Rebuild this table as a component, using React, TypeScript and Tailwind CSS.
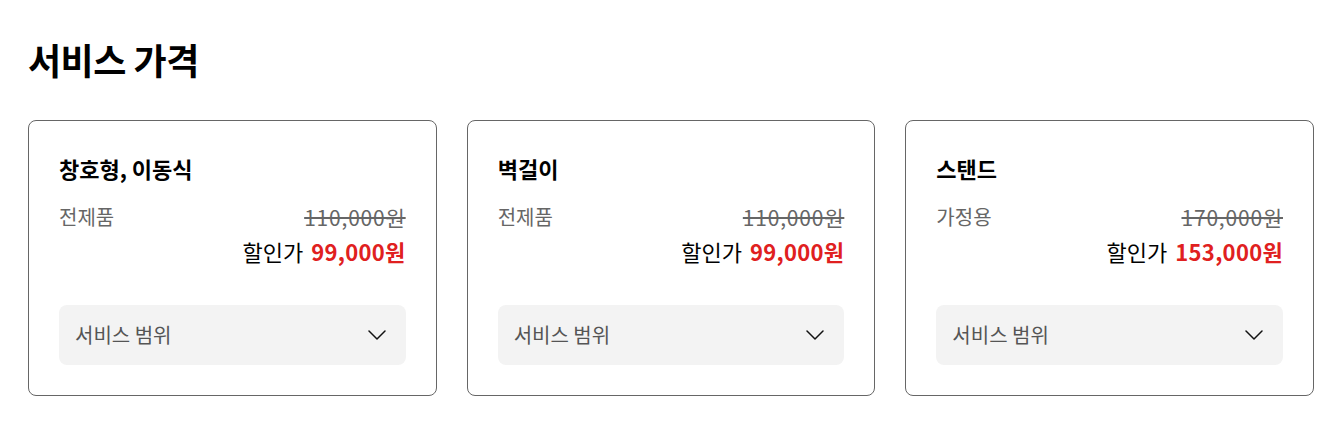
const PLANS = [
  { title: "창호형, 이동식", label: "전제품", original: "110,000원", sale: "99,000원" },
  { title: "벽걸이", label: "전제품", original: "110,000원", sale: "99,000원" },
  { title: "스탠드", label: "가정용", original: "170,000원", sale: "153,000원" },
];

function Chevron() {
  return (
    <svg width="18" height="10" viewBox="0 0 18 10" fill="none" className="shrink-0">
      <polyline points="1,1 9,9 17,1" stroke="#111" strokeWidth="1.5" strokeLinecap="round" strokeLinejoin="round" />
    </svg>
  );
}

export default function App() {
  return (
    <div className="bg-white px-[28px] pt-[35px] pb-[37px] font-['Noto_Sans_CJK_KR','Noto_Sans',sans-serif] text-black overflow-hidden">
      <h2 className="text-[36px] font-bold leading-[48px] tracking-[-0.5px]">서비스 가격</h2>

      <div className="mt-[37px] grid grid-cols-3 gap-[30px] w-[1286px]">
        {PLANS.map(plan => (
          <div key={plan.title} className="rounded-[8px] border border-[#666] px-[30px] pt-[30px] pb-[30px]">
            <h3 className="text-[22px] font-bold leading-[34px]">{plan.title}</h3>

            <div className="mt-[17px] flex items-center justify-between leading-[30px] text-[#666]">
              <span className="text-[20px]">{plan.label}</span>
              <span className="text-[21px] tracking-[0.8px] line-through">{plan.original}</span>
            </div>
            <div className="mt-[4px] text-right text-[22px] leading-[30px]">
              할인가<span className="ml-[8px] font-bold tracking-[0.3px] text-[#e02020]">{plan.sale}</span>
            </div>

            <button className="mt-[39px] flex h-[60px] w-full items-center justify-between rounded-[8px] bg-[#f3f3f3] pl-[16px] pr-[20px] text-[20px] text-[#555]">
              <span>서비스 범위</span>
              <Chevron />
            </button>
          </div>
        ))}
      </div>
    </div>
  );
}
